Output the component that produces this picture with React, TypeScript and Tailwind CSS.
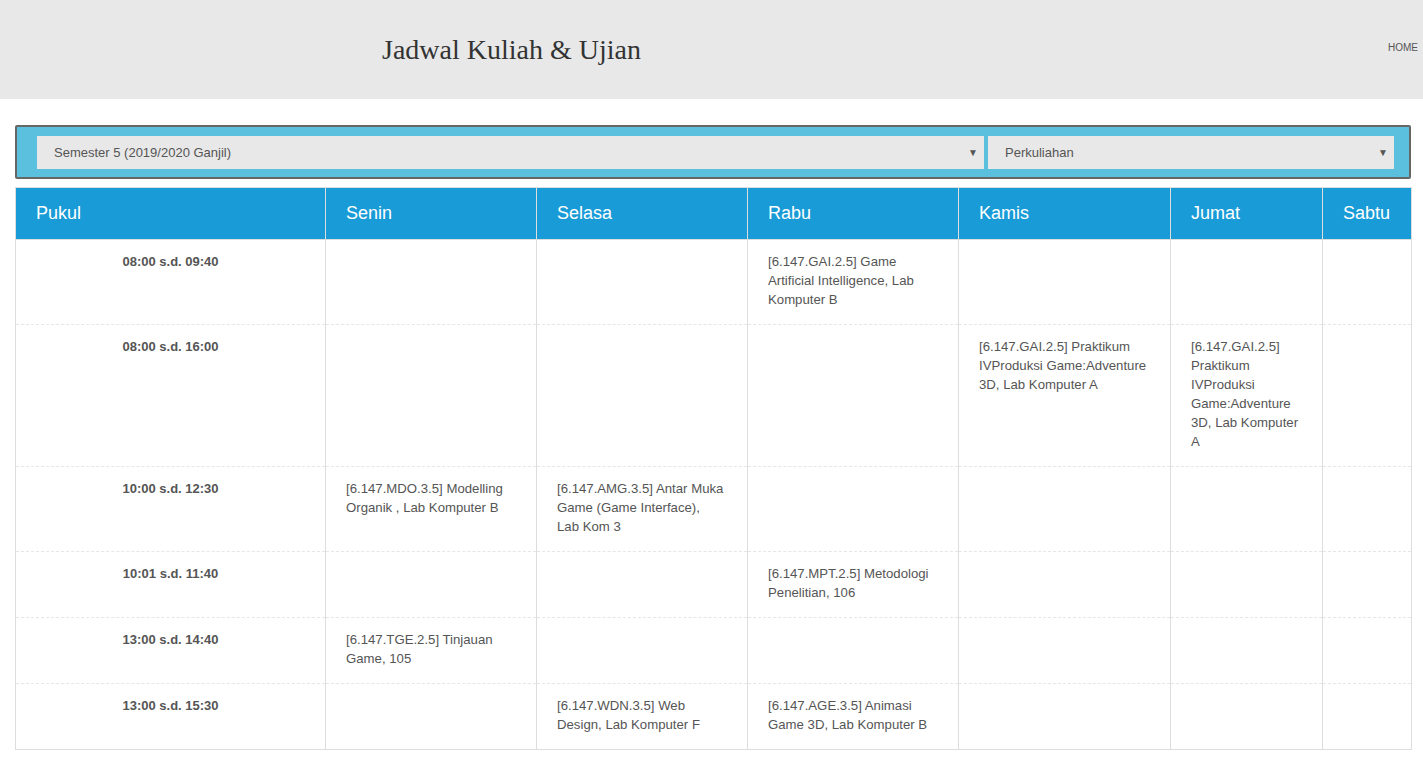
import React from "react";

type Row = { time: string; cells: (string[] | null)[] };

const gai = ["[6.147.GAI.2.5] Praktikum", "IVProduksi Game:Adventure", "3D, Lab Komputer A"];
const gaiNarrow = ["[6.147.GAI.2.5]", "Praktikum", "IVProduksi", "Game:Adventure", "3D, Lab Komputer", "A"];

const rows: Row[] = [
  { time: "08:00 s.d. 09:40", cells: [null, null, ["[6.147.GAI.2.5] Game", "Artificial Intelligence, Lab", "Komputer B"], null, null, null] },
  { time: "08:00 s.d. 16:00", cells: [null, null, null, gai, gaiNarrow, null] },
  { time: "10:00 s.d. 12:30", cells: [["[6.147.MDO.3.5] Modelling", "Organik , Lab Komputer B"], ["[6.147.AMG.3.5] Antar Muka", "Game (Game Interface),", "Lab Kom 3"], null, null, null, null] },
  { time: "10:01 s.d. 11:40", cells: [null, null, ["[6.147.MPT.2.5] Metodologi", "Penelitian, 106"], null, null, null] },
  { time: "13:00 s.d. 14:40", cells: [["[6.147.TGE.2.5] Tinjauan", "Game, 105"], null, null, null, null, null] },
  { time: "13:00 s.d. 15:30", cells: [null, ["[6.147.WDN.3.5] Web", "Design, Lab Komputer F"], ["[6.147.AGE.3.5] Animasi", "Game 3D, Lab Komputer B"], null, null, null] },
];

const days = ["Senin", "Selasa", "Rabu", "Kamis", "Jumat", "Sabtu"];
const widths = [310, 211, 211, 211, 212, 152, 89];

export default function App() {
  return (
    <div className="min-h-[778px] bg-white font-['Liberation_Sans',Arial,sans-serif]">
      <header className="h-[99px] bg-[#e8e8e8] flex items-start">
        <h1 className="ml-[382px] mt-[32px] text-[28px] leading-[36px] text-[#333] font-['Liberation_Serif','Times_New_Roman',serif] font-normal">
          Jadwal Kuliah &amp; Ujian
        </h1>
        <nav className="ml-auto mr-[5px] mt-[42px] text-[10px] leading-[12px] text-[#555]">HOME</nav>
      </header>

      <div className="ml-[15px] mr-[12px] mt-[26px] border-2 border-[#666] rounded-[2px] bg-[#5bc0de] pl-[20px] pr-[15px] pt-[9px] pb-[8px] flex gap-[4px]">
        <div className="w-[947px] h-[33px] bg-[#e8e8e8] flex items-center pl-[17px] pr-[6px] text-[13px] text-[#555]">
          <span>Semester 5 (2019/2020 Ganjil)</span>
          <span className="ml-auto text-[10px] text-[#555]">▼</span>
        </div>
        <div className="flex-1 h-[33px] bg-[#e8e8e8] flex items-center pl-[17px] pr-[6px] text-[13px] text-[#555]">
          <span>Perkuliahan</span>
          <span className="ml-auto text-[10px] text-[#555]">▼</span>
        </div>
      </div>

      <table className="ml-[15px] mt-[8px] w-[1396px] border-collapse border border-[#ddd] table-fixed">
        <colgroup>
          {widths.map((w, i) => (
            <col key={i} style={{ width: w }} />
          ))}
        </colgroup>
        <thead>
          <tr className="bg-[#189bd6] h-[52px]">
            <th className="border border-[#ddd] text-left font-normal text-white text-[18px] leading-[20px] pl-[20px] pb-[2px]">Pukul</th>
            {days.map((d) => (
              <th key={d} className="border border-[#ddd] text-left font-normal text-white text-[18px] leading-[20px] pl-[20px] pb-[2px]">
                {d}
              </th>
            ))}
          </tr>
        </thead>
        <tbody>
          {rows.map((r, ri) => (
            <tr key={ri} className={ri < rows.length - 1 ? "border-b border-dashed border-b-[#e6e6e6]" : ""}>
              <td className="border-l border-r border-[#ddd] align-top text-center font-bold text-[13px] leading-[19px] text-[#555] pt-[12px] pb-[15px] px-[20px]">
                {r.time}
              </td>
              {r.cells.map((c, ci) => (
                <td key={ci} className="border-l border-r border-[#ddd] align-top text-left text-[13.2px] leading-[19px] text-[#555] pt-[12px] pb-[15px] px-[20px] whitespace-nowrap">
                  {c && c.map((line, li) => <div key={li}>{line}</div>)}
                </td>
              ))}
            </tr>
          ))}
        </tbody>
      </table>
    </div>
  );
}
